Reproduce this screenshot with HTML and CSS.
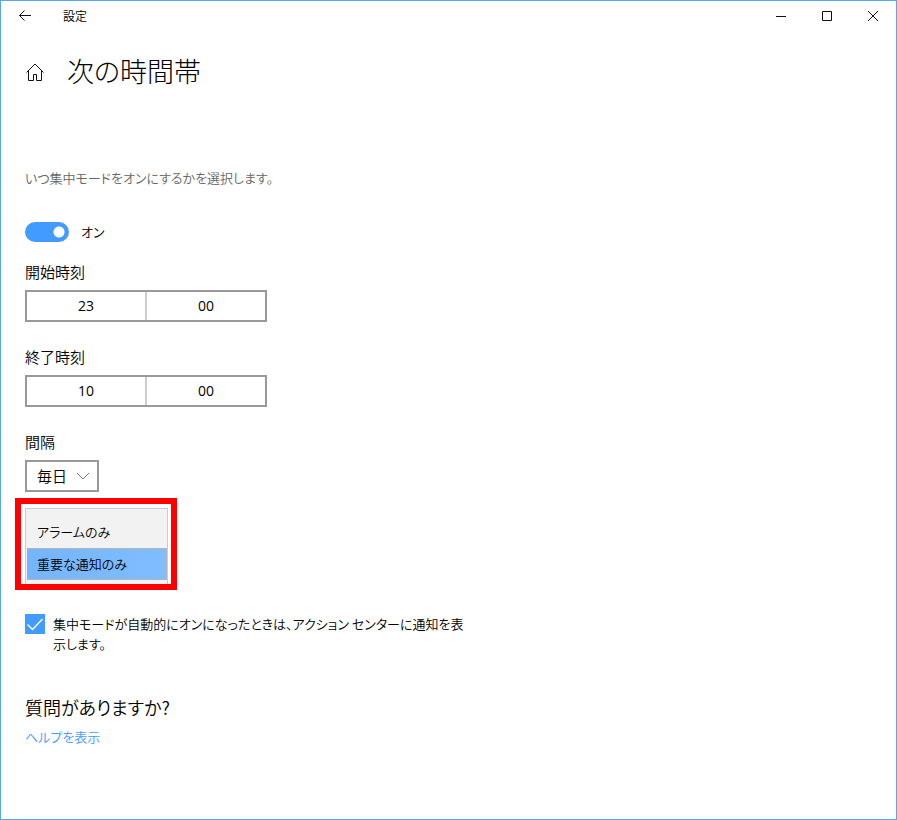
FILE: index.html
```html
<!DOCTYPE html>
<html lang="ja">
<head>
<meta charset="utf-8">
<meta name="viewport" content="width=device-width, initial-scale=1">
<title>設定</title>
<link rel="stylesheet" href="styles.css">
</head>
<body>
<div class="window">
  <header class="titlebar">
    <button class="caption-button back" type="button" aria-label="戻る">
      <svg width="14" height="12" viewBox="0 0 14 12"><path d="M13 5.500H1.500M6.500 0.500L1.500 5.500L6.500 10.500"/></svg>
    </button>
    <span class="app-name">設定</span>
    <button class="caption-button" type="button" aria-label="最小化">
      <svg width="12" height="12" viewBox="0 0 12 12"><path d="M1 6.500H11"/></svg>
    </button>
    <button class="caption-button" type="button" aria-label="最大化">
      <svg width="12" height="12" viewBox="0 0 12 12"><path d="M1.500 1.500H10.500V10.500H1.500Z"/></svg>
    </button>
    <button class="caption-button" type="button" aria-label="閉じる">
      <svg width="12" height="12" viewBox="0 0 12 12"><path d="M1 1L11 11M11 1L1 11"/></svg>
    </button>
  </header>
  <main class="page">
    <div class="page-title">
      <a class="home" href="#" aria-label="ホーム">
        <svg width="20" height="20" viewBox="0 0 20 20"><path d="M1.500 11.500L10 3L18.500 11.500M3.500 10V19.500H8.500V13.500H11.500V19.500H16.500V10"/></svg>
      </a>
      <h1>次の時間帯</h1>
    </div>
    <p class="description">いつ集中モードをオンにするかを選択します。</p>
    <label class="toggle-row"><input class="toggle" type="checkbox" role="switch" checked>オン</label>

    <div class="field" role="group" aria-labelledby="start-label">
      <span class="field-label" id="start-label">開始時刻</span>
      <div class="time-picker">
        <input type="text" inputmode="numeric" value="23" aria-label="開始時刻 時">
        <input type="text" inputmode="numeric" value="00" aria-label="開始時刻 分">
      </div>
    </div>
    <div class="field" role="group" aria-labelledby="end-label">
      <span class="field-label" id="end-label">終了時刻</span>
      <div class="time-picker">
        <input type="text" inputmode="numeric" value="10" aria-label="終了時刻 時">
        <input type="text" inputmode="numeric" value="00" aria-label="終了時刻 分">
      </div>
    </div>
    <div class="field interval">
      <label class="field-label" for="interval">間隔</label>
      <div class="dropdown">
        <select id="interval"><option>毎日</option></select>
        <svg class="chevron" width="14" height="8" viewBox="0 0 14 8"><path d="M1 1L7 7L13 1"/></svg>
      </div>
    </div>

    <div class="highlight">
      <div class="options" role="listbox" aria-label="集中モード">
        <button type="button" role="option" aria-selected="false">アラームのみ</button>
        <button type="button" role="option" aria-selected="true">重要な通知のみ</button>
      </div>
    </div>

    <div class="check-row">
      <span class="check-box">
        <input id="notify" type="checkbox" checked>
        <svg class="check-mark" width="20" height="20" viewBox="0 0 20 20"><path d="M2.500 10.500L7.500 15.500L17.500 5"/></svg>
      </span>
      <label for="notify">集中モードが自動的にオンになったときは、アクション センターに通知を表示します。</label>
    </div>

    <h2>質問がありますか?</h2>
    <a class="help" href="#">ヘルプを表示</a>
  </main>
</div>
</body>
</html>
```
FILE: styles.css
```css
* {
  box-sizing: border-box;
}

body {
  margin: 0;
  background: #fff;
  color: #000;
  font: 350 13px/20px "Noto Sans CJK JP", sans-serif;
  font-feature-settings: "palt";
}

button,
input,
select {
  margin: 0;
  padding: 0;
  border: 0;
  border-radius: 0;
  background: none;
  color: inherit;
  font: inherit;
  font-feature-settings: inherit;
  appearance: none;
}

svg {
  display: block;
  fill: none;
  stroke: #111;
}

h1,
h2,
p {
  margin: 0;
  font-weight: 350;
}

.window {
  min-height: 100vh;
  border: 1px solid #57a5f5;
}

.titlebar {
  display: flex;
  align-items: center;
  height: 30px;
}

.app-name {
  flex: 1;
  padding-left: 14px;
  font-size: 12px;
}

.caption-button {
  display: grid;
  place-items: center;
  width: 46px;
  height: 30px;
}

.caption-button.back {
  width: 48px;
}

.page {
  padding: 20px 24px;
}

.page-title {
  display: flex;
  align-items: center;
  gap: 22px;
  height: 40px;
}

h1 {
  font-size: 27px;
  font-weight: 300;
  line-height: 40px;
}

.description {
  margin-top: 77px;
  color: #666;
}

.toggle-row {
  display: flex;
  align-items: center;
  gap: 12px;
  width: max-content;
  margin-top: 34px;
}

.toggle {
  width: 44px;
  height: 20px;
  border-radius: 10px;
  background: radial-gradient(circle at 34px 10px, #fff 5px, #429cff 6px);
}

.field {
  margin-top: 20px;
}

.field-label {
  display: block;
  margin-bottom: 8px;
  font-size: 15px;
}

.field + .field {
  margin-top: 25px;
}

.time-picker {
  display: flex;
  width: 100%;
  max-width: 242px;
  height: 32px;
  border: 2px solid #999;
}

.time-picker input {
  flex: 1;
  min-width: 0;
  text-align: center;
  font-family: "Open Sans", sans-serif;
  font-size: 14px;
  font-weight: 400;
}

.time-picker input + input {
  border-left: 2px solid #ccc;
}

.dropdown {
  display: grid;
  align-items: center;
  width: max-content;
}

.dropdown > * {
  grid-area: 1 / 1;
}

.dropdown select {
  width: 74px;
  height: 32px;
  padding: 0 10px;
  border: 2px solid #999;
  font-size: 15px;
}

.chevron {
  justify-self: end;
  margin-right: 9px;
  stroke: #777;
  pointer-events: none;
}

.highlight {
  width: max-content;
  margin: 6px 0 0 -10px;
  padding: 4px 3px 0 4px;
  border: 6px solid #f00;
}

.options {
  width: 143px;
  height: 76px;
  padding: 7px 0 0 1px;
  border: 1px solid #ccc;
  border-bottom: 0;
  background: #f2f2f2;
}

.options button {
  display: block;
  width: 100%;
  height: 32px;
  padding-left: 10px;
  text-align: left;
}

.options [aria-selected="true"] {
  border: 1px solid #b5b5b5;
  border-left: 0;
  background: linear-gradient(90deg, #75b5ff, #80bdff);
}

.check-row {
  display: flex;
  gap: 8px;
  max-width: 446px;
  margin-top: 24px;
}

.check-box {
  display: grid;
  flex: none;
  width: 20px;
  height: 20px;
}

.check-box > * {
  grid-area: 1 / 1;
}

.check-box input {
  background: #429cff;
}

.check-mark {
  stroke: #fff;
  stroke-width: 1.4;
  pointer-events: none;
}

h2 {
  margin-top: 38px;
  font-size: 18px;
  line-height: 30px;
}

.help {
  display: block;
  width: max-content;
  margin-top: 5px;
  color: #429cff;
  text-decoration: none;
}
```
